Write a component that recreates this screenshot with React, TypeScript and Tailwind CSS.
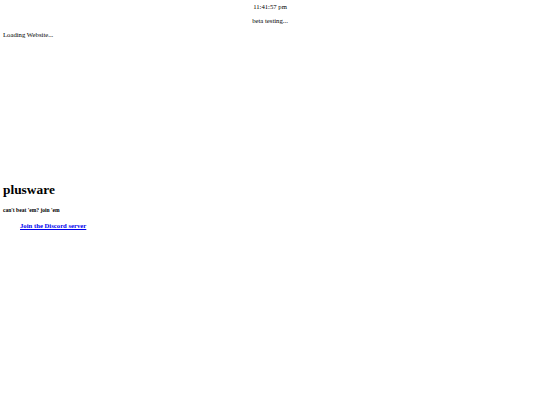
export default function App() {
  return (
    <main className="min-h-screen bg-white px-[3px] text-black font-['Liberation_Serif',serif] text-[6.7px]">
      <div className="h-[14px] text-center leading-[14px]">11:41:57 pm</div>
      <div className="h-[14px] text-center leading-[14px]">beta testing...</div>
      <div className="h-[14px] leading-[14px]">Loading Website...</div>

      <h1 className="mt-[140px] h-[16px] text-[13.4px] font-bold leading-[16px]">plusware</h1>
      <h5 className="mt-[8px] h-[8px] text-[5.56px] font-bold leading-[8px]">can't beat 'em? join 'em</h5>
      <ul className="mt-[8px] pl-[17px]">
        <li className="h-[8px] leading-[8px]">
          <a href="#" className="font-bold text-[#0000ee] underline">
            Join the Discord server
          </a>
        </li>
      </ul>
    </main>
  );
}
